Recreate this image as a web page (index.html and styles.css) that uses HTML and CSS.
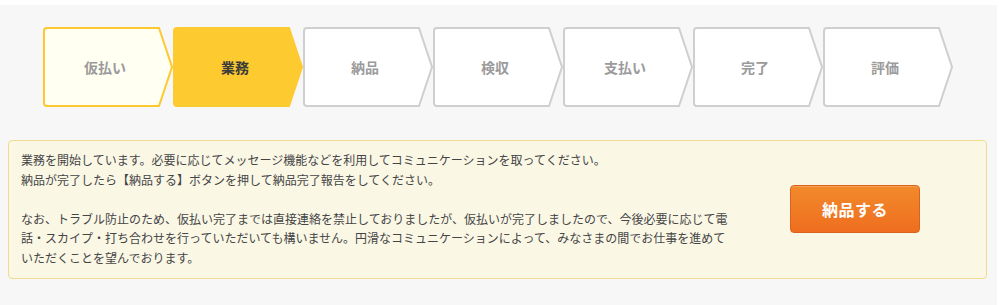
FILE: index.html
```html
<!DOCTYPE html>
<html lang="ja">
<head>
<meta charset="utf-8">
<title>Progress</title>
<link rel="stylesheet" href="styles.css">
</head>
<body>
<div class="page">
  <div class="steps">
    <div class="step step--done">
      <svg class="step__shape" viewBox="0 0 130 80" width="130" height="80"><path d="M4,1 H116 L129,40 L116,79 H4 Q1,79 1,76 V4 Q1,1 4,1 Z"/></svg>
      <span class="step__label">仮払い</span>
    </div>
    <div class="step step--active">
      <svg class="step__shape" viewBox="0 0 130 80" width="130" height="80"><path d="M4,1 H116 L129,40 L116,79 H4 Q1,79 1,76 V4 Q1,1 4,1 Z"/></svg>
      <span class="step__label">業務</span>
    </div>
    <div class="step">
      <svg class="step__shape" viewBox="0 0 130 80" width="130" height="80"><path d="M4,1 H116 L129,40 L116,79 H4 Q1,79 1,76 V4 Q1,1 4,1 Z"/></svg>
      <span class="step__label">納品</span>
    </div>
    <div class="step">
      <svg class="step__shape" viewBox="0 0 130 80" width="130" height="80"><path d="M4,1 H116 L129,40 L116,79 H4 Q1,79 1,76 V4 Q1,1 4,1 Z"/></svg>
      <span class="step__label">検収</span>
    </div>
    <div class="step">
      <svg class="step__shape" viewBox="0 0 130 80" width="130" height="80"><path d="M4,1 H116 L129,40 L116,79 H4 Q1,79 1,76 V4 Q1,1 4,1 Z"/></svg>
      <span class="step__label">支払い</span>
    </div>
    <div class="step">
      <svg class="step__shape" viewBox="0 0 130 80" width="130" height="80"><path d="M4,1 H116 L129,40 L116,79 H4 Q1,79 1,76 V4 Q1,1 4,1 Z"/></svg>
      <span class="step__label">完了</span>
    </div>
    <div class="step">
      <svg class="step__shape" viewBox="0 0 130 80" width="130" height="80"><path d="M4,1 H116 L129,40 L116,79 H4 Q1,79 1,76 V4 Q1,1 4,1 Z"/></svg>
      <span class="step__label">評価</span>
    </div>
  </div>

  <div class="notice">
    <div class="notice__text">
      <p>業務を開始しています。必要に応じてメッセージ機能などを利用してコミュニケーションを取ってください。<br>納品が完了したら【納品する】ボタンを押して納品完了報告をしてください。</p>
      <p>なお、トラブル防止のため、仮払い完了までは直接連絡を禁止しておりましたが、仮払いが完了しましたので、今後必要に応じて電話・スカイプ・打ち合わせを行っていただいても構いません。円滑なコミュニケーションによって、みなさまの間でお仕事を進めていただくことを望んでおります。</p>
    </div>
    <div class="notice__action">
      <button class="btn-deliver" type="button">納品する</button>
    </div>
  </div>
</div>
</body>
</html>
```

FILE: styles.css
```css
html, body {
  margin: 0;
  padding: 0;
  background: #ffffff;
}

body {
  font-family: "Noto Sans CJK JP", "Noto Sans", sans-serif;
  color: #444;
}

.page {
  margin-top: 5px;
  width: 997px;
  height: 300px;
  background: #f7f7f7;
  overflow: hidden;
}

.steps {
  display: flex;
  padding: 22px 0 0 43px;
}

.step {
  display: grid;
  width: 130px;
  height: 80px;
}

.step__shape,
.step__label {
  grid-area: 1 / 1;
}

.step__shape path {
  fill: #ffffff;
  stroke: #cfcfcf;
  stroke-width: 2;
}

.step__label {
  align-self: center;
  justify-self: center;
  padding-right: 6px;
  font-size: 14px;
  font-weight: 700;
  color: #9b9b9b;
  line-height: 1;
}

.step--done .step__shape path {
  fill: #fffff2;
  stroke: #fcc930;
}

.step--active .step__shape path {
  fill: #fdca30;
  stroke: #fdca30;
}

.step--active .step__label {
  color: #3a3a3a;
}

.notice {
  display: flex;
  align-items: center;
  margin: 33px 0 0 8px;
  width: 979px;
  box-sizing: border-box;
  border: 1px solid #efdc91;
  border-radius: 4px;
  background: #faf7e5;
  padding: 9px 0 10px 12px;
}

.notice__text {
  width: 712px;
  font-size: 12px;
  line-height: 19.6px;
  color: #454545;
}

.notice__text p {
  margin: 0;
}

.notice__text p + p {
  margin-top: 19.6px;
}

.notice__action {
  flex: 1;
  display: flex;
  justify-content: center;
  padding-right: 9px;
}

.btn-deliver {
  width: 130px;
  height: 48px;
  border: 1px solid #d9621c;
  border-radius: 4px;
  background: linear-gradient(#f28a2b, #ef6e1f);
  color: #ffffff;
  font-family: "Noto Sans CJK JP", sans-serif;
  font-size: 16px;
  font-weight: 700;
  letter-spacing: 0.5px;
  padding: 0;
  box-shadow: inset 0 1px 0 rgba(255,255,255,0.2);
}
```
